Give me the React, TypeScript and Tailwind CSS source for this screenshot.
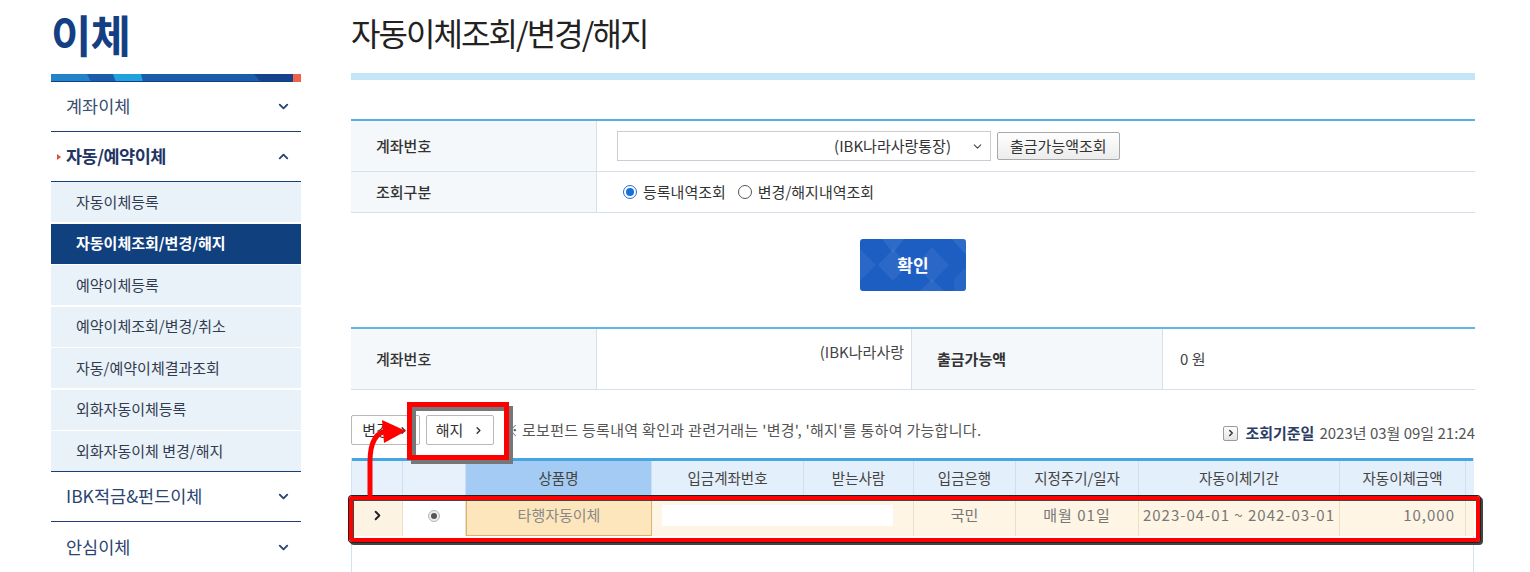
import React from 'react';
import { ChevronDown, ChevronUp, ChevronRight } from 'lucide-react';

const subMenus = [
  '자동이체등록',
  '자동이체조회/변경/해지',
  '예약이체등록',
  '예약이체조회/변경/취소',
  '자동/예약이체결과조회',
  '외화자동이체등록',
  '외화자동이체 변경/해지',
];

const StripeBar: React.FC = () => (
  <svg width="250" height="8" viewBox="0 0 250 8" className="block">
    <rect x="0" y="0" width="250" height="8" fill="#1a5dab" />
    <polygon points="0,0 36,0 40,8 0,8" fill="#2383c9" />
    <polygon points="62,0 90,0 92,8 65,8" fill="#21a2de" />
    <polygon points="203,0 242,0 242,8 210,8" fill="#15428a" />
    <rect x="242" y="0" width="8" height="8" fill="#f0614b" />
    <rect x="0" y="7" width="242" height="1" fill="#123f80" />
  </svg>
);

const Sidebar: React.FC = () => (
  <aside className="ml-[51px] w-[250px] shrink-0">
    <h1 className="h-[74px] pt-[4px] text-[44px] font-bold leading-[60px] tracking-[-1px] text-[#143f84]">이체</h1>
    <StripeBar />
    <div className="flex h-[50px] items-center justify-between border-b-[1.5px] border-[#1b3d78] pl-[15px] pr-[10px] text-[17.5px] text-[#3a4d72]">
      <span>계좌이체</span>
      <ChevronDown size={15} strokeWidth={3} className="text-[#2b4373]" />
    </div>
    <div className="flex h-[50px] items-center justify-between border-b-[1.5px] border-[#1b3d78] pl-[6px] pr-[10px]">
      <div className="flex items-center">
        <span className="mr-[5px] h-0 w-0 border-y-[3px] border-l-[4px] border-y-transparent border-l-[#e8473a]" />
        <span className="text-[17.5px] font-bold tracking-[-0.5px] text-[#1f3566]">자동/예약이체</span>
      </div>
      <ChevronUp size={15} strokeWidth={3} className="text-[#2b4373]" />
    </div>
    <div className="flex flex-col gap-[1.5px] border-b-[1.5px] border-[#1b3d78] bg-white">
      {subMenus.map((m, i) => (
        <div
          key={m}
          className={`flex h-[40px] items-center pl-[25px] text-[15px] ${
            i === 1 ? 'bg-[#11407f] font-bold text-white' : 'bg-[#e9f2f9] text-[#333b4f]'
          }`}
        >
          {m}
        </div>
      ))}
    </div>
    <div className="flex h-[50px] items-center justify-between border-b-[1.5px] border-[#1b3d78] pl-[15px] pr-[10px] text-[17.5px] text-[#2b4570]">
      <span>IBK적금&amp;펀드이체</span>
      <ChevronDown size={15} strokeWidth={3} className="text-[#2b4373]" />
    </div>
    <div className="flex h-[50px] items-center justify-between pl-[15px] pr-[10px] text-[17.5px] text-[#2b4570]">
      <span>안심이체</span>
      <ChevronDown size={15} strokeWidth={3} className="text-[#2b4373]" />
    </div>
  </aside>
);

const Radio: React.FC<{ checked?: boolean; label: string }> = ({ checked, label }) => (
  <label className="flex items-center gap-[6px] text-[15px] text-[#333]">
    <span
      className={`flex h-[14px] w-[14px] items-center justify-center rounded-full border-[1.5px] ${
        checked ? 'border-[#1a6fd6] bg-white' : 'border-[#555] bg-white'
      }`}
    >
      {checked && <span className="h-[8px] w-[8px] rounded-full bg-[#1a6fd6]" />}
    </span>
    {label}
  </label>
);

const ConfirmButton: React.FC = () => (
  <button className="relative mx-auto mt-[26px] block h-[52px] w-[106px] overflow-hidden rounded-[3px] bg-[#1d5ec3] text-[17px] font-bold text-white">
    <svg className="absolute inset-0" width="106" height="52" viewBox="0 0 106 52">
      <polygon points="0,10 16,26 0,42" fill="#ffffff" opacity="0.06" />
      <polygon points="22,0 44,0 33,14" fill="#ffffff" opacity="0.08" />
      <polygon points="18,26 33,10 48,26 33,42" fill="#ffffff" opacity="0.07" />
      <polygon points="55,26 72,8 89,26 72,44" fill="#ffffff" opacity="0.06" />
      <polygon points="60,52 72,40 84,52" fill="#ffffff" opacity="0.07" />
      <polygon points="92,0 106,0 106,16" fill="#ffffff" opacity="0.08" />
      <polygon points="94,40 106,28 106,52 94,52" fill="#ffffff" opacity="0.05" />
    </svg>
    <span className="relative">확인</span>
  </button>
);

const cols = 'grid grid-cols-[51px_63px_186px_152px_110px_102px_123px_201px_126px_8px]';

const DataTable: React.FC = () => (
  <div className="mt-[13px] h-[200px] w-[1123px] border-x border-[#d5e3f0]">
    <div className={`${cols} h-[37px] border-t-[3px] border-[#45a6e3] text-[14.5px] text-[#444]`}>
      <div className="border-r border-[#cde0f2] bg-[#e7f1fb]" />
      <div className="border-r border-[#cde0f2] bg-[#e7f1fb]" />
      <div className="flex items-center justify-center border-r border-[#cde0f2] bg-[#a3cbf3]">상품명</div>
      <div className="flex items-center justify-center border-r border-[#cde0f2] bg-[#e3effa]">입금계좌번호</div>
      <div className="flex items-center justify-center border-r border-[#cde0f2] bg-[#e3effa]">받는사람</div>
      <div className="flex items-center justify-center border-r border-[#cde0f2] bg-[#e3effa]">입금은행</div>
      <div className="flex items-center justify-center border-r border-[#cde0f2] bg-[#e3effa]">지정주기/일자</div>
      <div className="flex items-center justify-center border-r border-[#cde0f2] bg-[#e3effa]">자동이체기간</div>
      <div className="flex items-center justify-center border-r border-[#cde0f2] bg-[#e3effa]">자동이체금액</div>
      <div className="bg-[#e3effa]" />
    </div>
    <div className={`${cols} h-[41px] text-[15px] text-[#777]`}>
      <div className="flex items-center justify-center border-r border-[#ecdfc8] bg-[#fdf3e3]">
        <ChevronRight size={15} strokeWidth={3} className="text-[#222]" />
      </div>
      <div className="flex items-center justify-center border-r border-[#ecdfc8] bg-white">
        <span className="flex h-[12px] w-[12px] items-center justify-center rounded-full border border-[#b5b5b5] bg-[#eee]">
          <span className="h-[6px] w-[6px] rounded-full bg-[#555]" />
        </span>
      </div>
      <div className="flex items-center justify-center border border-[#dcb36c] bg-[#fde6bb] text-[#888]">타행자동이체</div>
      <div className="flex items-center bg-[#fef5e5] pl-[10px]">
        <div className="h-[21px] flex-1 bg-white" />
      </div>
      <div className="flex items-center border-r border-[#ecdfc8] bg-[#fef5e5] pr-[20px]">
        <div className="h-[21px] flex-1 bg-white" />
      </div>
      <div className="flex items-center justify-center border-r border-[#ecdfc8] bg-[#fef5e5]">국민</div>
      <div className="flex items-center justify-center border-r border-[#ecdfc8] bg-[#fef5e5] tracking-[1px]">매월 01일</div>
      <div className="flex items-center justify-center border-r border-[#ecdfc8] bg-[#fef5e5] tracking-[1px]">2023-04-01 ~ 2042-03-01</div>
      <div className="flex items-center justify-end border-r border-[#ecdfc8] bg-[#fef5e5] pr-[10px] tracking-[1px]">10,000</div>
      <div className="bg-[#fef5e5]" />
    </div>
  </div>
);

export default function App() {
  return (
    <div className="relative flex h-[572px] w-[1530px] overflow-hidden bg-white font-['Noto_Sans_CJK_KR','Noto_Sans',sans-serif]">
      <Sidebar />

      <main className="ml-[50px] w-[1124px] shrink-0">
        <h2 className="h-[73px] pt-[10px] text-[32px] leading-[44px] tracking-[-0.06em] text-[#222]">자동이체조회/변경/해지</h2>
        <div className="h-[7px] bg-[#c3e5f5]" />

        {/* 조회 조건 */}
        <div className="mt-[39px] border-t-2 border-[#5aaee3]">
          <div className="flex h-[51px] border-b border-[#d5e0ea]">
            <div className="flex w-[246px] items-center border-r border-[#d5e0ea] bg-[#f5f8fb] pl-[25px] text-[15px] font-medium text-[#333]">
              계좌번호
            </div>
            <div className="flex items-center pl-[20px]">
              <div className="flex h-[30px] w-[374px] items-center justify-end border border-[#ccc] bg-white pr-[6px] text-[15px] text-[#333]">
                <span>(IBK나라사랑통장)</span>
                <ChevronDown size={13} strokeWidth={2} className="ml-[20px] text-[#444]" />
              </div>
              <button className="ml-[6px] h-[28px] rounded-[2px] border border-[#a9a9a9] bg-gradient-to-b from-white to-[#ececec] px-[12px] text-[15px] text-[#333]">
                출금가능액조회
              </button>
            </div>
          </div>
          <div className="flex h-[41px] border-b border-[#d5e0ea]">
            <div className="flex w-[246px] items-center border-r border-[#d5e0ea] bg-[#f5f8fb] pl-[25px] text-[15px] font-medium text-[#333]">
              조회구분
            </div>
            <div className="flex items-center gap-[12px] pl-[26px]">
              <Radio checked label="등록내역조회" />
              <Radio label="변경/해지내역조회" />
            </div>
          </div>
        </div>

        <ConfirmButton />

        {/* 조회 결과 */}
        <div className="mt-[36px] flex h-[63px] border-y border-t-2 border-[#d5e0ea] border-t-[#64b5e6]">
          <div className="flex w-[246px] items-center border-r border-[#d5e0ea] bg-[#f5f8fb] pl-[25px] text-[15px] font-medium text-[#333]">
            계좌번호
          </div>
          <div className="flex w-[315px] justify-end border-r border-[#d5e0ea] pr-[7px] pt-[12px] text-[15px] text-[#444]">
            (IBK나라사랑
          </div>
          <div className="flex w-[251px] items-center border-r border-[#d5e0ea] bg-[#f5f8fb] pl-[25px] text-[15px] font-bold text-[#333]">
            출금가능액
          </div>
          <div className="flex flex-1 items-center pl-[17px] text-[15px] text-[#444]">0 원</div>
        </div>

        {/* 버튼 / 안내 */}
        <div className="mt-[25px] flex h-[30px] items-center">
          <button className="flex h-[30px] w-[69px] items-center justify-center gap-[8px] rounded-[2px] border border-[#b8b8b8] bg-white text-[15px] text-[#333]">
            변경 <ChevronRight size={11} strokeWidth={3} />
          </button>
          <button className="ml-[6px] flex h-[30px] w-[68px] items-center justify-center gap-[10px] rounded-[2px] border border-[#b8b8b8] bg-white text-[15px] text-[#333]">
            해지 <ChevronRight size={11} strokeWidth={3} />
          </button>
          <p className="ml-[9px] text-[15px] tracking-[0.3px] text-[#555]">
            ※ 로보펀드 등록내역 확인과 관련거래는 '변경', '해지'를 통하여 가능합니다.
          </p>
          <div className="ml-auto mt-[6px] flex items-center text-[15px]">
            <span className="mr-[7px] flex h-[15px] w-[15px] items-center justify-center rounded-[2px] border border-[#9a9a9a] bg-gradient-to-b from-white to-[#e3e3e3]">
              <ChevronRight size={10} strokeWidth={3.5} className="text-[#333]" />
            </span>
            <span className="font-bold text-[#2c3e66]">조회기준일</span>
            <span className="ml-[5px] text-[#555]">2023년 03월 09일 21:24</span>
          </div>
        </div>

        <DataTable />
      </main>

      {/* 주석 표시 */}
      <div className="absolute left-[407px] top-[402px] h-[58px] w-[102px] border-[5px] border-[#ff0000] shadow-[4px_4px_0_#777,inset_4px_4px_0_#777]" />
      <div className="absolute left-[349px] top-[496px] h-[46px] w-[1131px] rounded-[3px] border-[4px] border-[#ff0000] shadow-[0_0_0_1px_#222,2px_2px_0_1px_#444,inset_1px_1px_0_#444]" />
      <svg className="absolute left-0 top-0" width="1530" height="572" viewBox="0 0 1530 572">
        <path d="M370 494 L370 462 Q370 432 388 431" fill="none" stroke="#ff0000" strokeWidth="5" strokeLinecap="round" />
        <polygon points="382,420 406,431 384,443" fill="#ff0000" />
      </svg>
    </div>
  );
}
